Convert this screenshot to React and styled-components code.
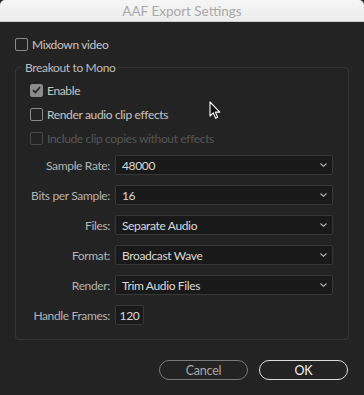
import React from 'react';
import styled, { createGlobalStyle } from 'styled-components';

const GlobalStyle = createGlobalStyle`
  html, body {
    margin: 0;
    padding: 0;
    background: #232323;
  }
  body {
    font-family: Lato, "Liberation Sans", sans-serif;
    font-size: 12px;
    letter-spacing: -0.35px;
  }
`;

const Window = styled.div`
  position: relative;
  width: 364px;
  height: 395px;
  background: #232323;
  display: flex;
  flex-direction: column;
  overflow: hidden;
`;

const TitleBar = styled.div`
  height: 21px;
  flex-shrink: 0;
  background: linear-gradient(#f6f6f6, #ececec);
  border-bottom: 1px solid #cfcfcf;
  border-radius: 5px 5px 0 0;
  display: flex;
  align-items: center;
  justify-content: center;
  color: #a9a9a9;
  font-size: 13.5px;
  letter-spacing: 0;
`;

const Body = styled.div`
  padding: 15px 15px 0 15px;
  display: flex;
  flex-direction: column;
`;

const CheckRow = styled.label`
  display: flex;
  align-items: center;
  gap: 4px;
  height: 14px;
  color: ${(p) => (p.disabled ? '#575757' : '#c6c6c6')};
`;

const Box = styled.span`
  width: 13px;
  height: 13px;
  box-sizing: border-box;
  border-radius: 2px;
  border: 1.5px solid ${(p) => (p.disabled ? '#474747' : '#8a8a8a')};
  background: ${(p) => (p.checked ? '#8c8c8c' : 'transparent')};
  display: flex;
  align-items: center;
  justify-content: center;
  flex-shrink: 0;
`;

const Group = styled.fieldset`
  margin: 9px 0 0 0;
  padding: 8px 15px 14px 14px;
  border: 1px solid #363636;
  border-radius: 4px;
  display: flex;
  flex-direction: column;
`;

const Legend = styled.legend`
  padding: 0 4px;
  margin-left: -9px;
  color: #bdbdbd;
  font-size: 12px;
  line-height: 15px;
`;

const Checks = styled.div`
  display: flex;
  flex-direction: column;
  gap: 10px;
  margin-bottom: 10px;
`;

const Fields = styled.div`
  display: flex;
  flex-direction: column;
  gap: 10px;
`;

const FieldRow = styled.div`
  display: flex;
  align-items: center;
  gap: 5px;
`;

const Label = styled.span`
  width: 80px;
  text-align: right;
  color: #b4b4b4;
  white-space: nowrap;
`;

const Select = styled.div`
  flex: 1;
  height: 20px;
  box-sizing: border-box;
  background: #191919;
  border: 1px solid #373737;
  border-radius: 2px;
  display: flex;
  align-items: center;
  justify-content: space-between;
  padding: 0 5px 0 6px;
  color: #dadada;
`;

const NumberInput = styled.div`
  width: 29px;
  height: 20px;
  box-sizing: border-box;
  background: #191919;
  border: 1px solid #373737;
  border-radius: 2px;
  display: flex;
  align-items: center;
  justify-content: center;
  color: #dadada;
`;

const Footer = styled.div`
  display: flex;
  justify-content: flex-end;
  gap: 11px;
  padding: 20px 1px 0 0;
`;

const Button = styled.button`
  width: 89px;
  height: 20px;
  box-sizing: border-box;
  border-radius: 10px;
  background: transparent;
  border: 1.5px solid ${(p) => (p.$primary ? '#dcdcdc' : '#7a7a7a')};
  color: ${(p) => (p.$primary ? '#f2f2f2' : '#a8a8a8')};
  font-family: inherit;
  font-size: 12.5px;
  letter-spacing: -0.2px;
  padding: 0;
`;

const Cursor = styled.svg`
  position: absolute;
  left: 209px;
  top: 101px;
`;

function Check({ checked, disabled, children }) {
  return (
    <CheckRow disabled={disabled}>
      <Box checked={checked} disabled={disabled}>
        {checked && (
          <svg width="9" height="8" viewBox="0 0 9 8">
            <path d="M1 4.2 L3.4 6.5 L8 1" fill="none" stroke="#262626" strokeWidth="1.8" />
          </svg>
        )}
      </Box>
      {children}
    </CheckRow>
  );
}

function Chevron() {
  return (
    <svg width="7" height="4" viewBox="0 0 7 4">
      <path d="M0.5 0.5 L3.5 3.3 L6.5 0.5" fill="none" stroke="#b8b8b8" strokeWidth="1.1" />
    </svg>
  );
}

const fields = [
  ['Sample Rate:', '48000'],
  ['Bits per Sample:', '16'],
  ['Files:', 'Separate Audio'],
  ['Format:', 'Broadcast Wave'],
  ['Render:', 'Trim Audio Files'],
];

export default function App() {
  return (
    <Window>
      <GlobalStyle />
      <TitleBar>AAF Export Settings</TitleBar>
      <Body>
        <Check>Mixdown video</Check>
        <Group>
          <Legend>Breakout to Mono</Legend>
          <Checks>
            <Check checked>Enable</Check>
            <Check>Render audio clip effects</Check>
            <Check disabled>Include clip copies without effects</Check>
          </Checks>
          <Fields>
            {fields.map(([label, value]) => (
              <FieldRow key={label}>
                <Label>{label}</Label>
                <Select>
                  <span>{value}</span>
                  <Chevron />
                </Select>
              </FieldRow>
            ))}
            <FieldRow>
              <Label>Handle Frames:</Label>
              <NumberInput>120</NumberInput>
            </FieldRow>
          </Fields>
        </Group>
        <Footer>
          <Button>Cancel</Button>
          <Button $primary>OK</Button>
        </Footer>
      </Body>
      <Cursor width="12" height="19" viewBox="0 0 12 19">
        <path d="M1 1 L1 15 L4.3 11.8 L6.6 17.2 L8.6 16.3 L6.4 11.1 L10.8 11.1 Z" fill="#111" stroke="#fff" strokeWidth="1.1" strokeLinejoin="round" />
      </Cursor>
    </Window>
  );
}
